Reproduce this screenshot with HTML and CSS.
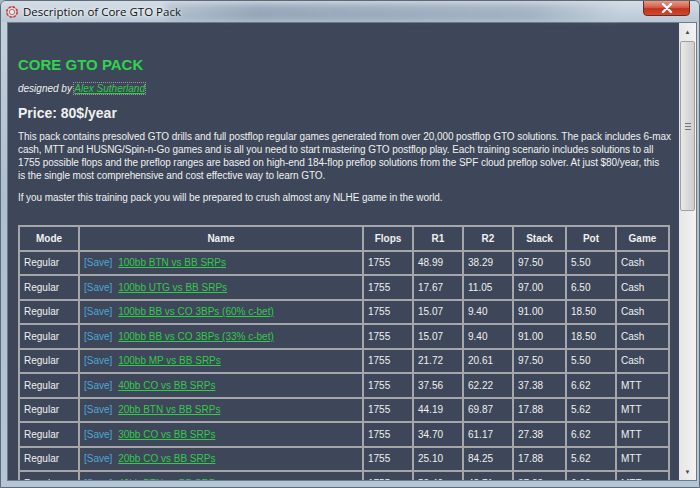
FILE: index.html
```html
<!DOCTYPE html>
<html lang="en">
<head>
  <meta charset="UTF-8">
  <title>Description of Core GTO Pack</title>
  <link rel="stylesheet" href="styles.css">
</head>
<body>

  <div class="window">
    <!-- Title bar -->
    <div class="titlebar">
      <svg class="app-icon" width="12" height="12" viewBox="0 0 12 12">
        <circle cx="6" cy="6" r="5.2" fill="#d8d8d8" stroke="#777" stroke-width="0.8"/>
        <circle cx="6" cy="6" r="5.2" fill="none" stroke="#d33" stroke-width="1.6" stroke-dasharray="2.2 1.9"/>
        <circle cx="6" cy="6" r="2.6" fill="#eee" stroke="#c44" stroke-width="0.8"/>
      </svg>
      <span class="title-text">Description of Core GTO Pack</span>
      <div class="glass-blur"></div>
      <div class="close-btn">
        <svg width="12" height="10" viewBox="0 0 12 10">
          <path d="M2 1 L10 9 M10 1 L2 9" stroke="#fff" stroke-width="2.4" stroke-linecap="round"/>
        </svg>
      </div>
    </div>

    <!-- Body -->
    <div class="frame">
      <div class="content">
        <h1>CORE GTO PACK</h1>
        <p class="author">designed by <a href="#">Alex Sutherland</a></p>
        <h2>Price: 80$/year</h2>
        <p class="desc">
          This pack contains presolved GTO drills and full postflop regular games generated from over 20,000 postflop GTO solutions. The pack includes 6-max<br>
          cash, MTT and HUSNG/Spin-n-Go games and is all you need to start mastering GTO postflop play. Each training scenario includes solutions to all<br>
          1755 possible flops and the preflop ranges are based on high-end 184-flop preflop solutions from the SPF cloud preflop solver. At just $80/year, this<br>
          is the single most comprehensive and cost effective way to learn GTO.
        </p>
        <p class="desc">If you master this training pack you will be prepared to crush almost any NLHE game in the world.</p>

        <table class="packs">
          <thead>
            <tr>
              <th class="c-mode">Mode</th>
              <th class="c-name">Name</th>
              <th class="c-num">Flops</th>
              <th class="c-num">R1</th>
              <th class="c-num">R2</th>
              <th class="c-stack">Stack</th>
              <th class="c-num">Pot</th>
              <th class="c-game">Game</th>
            </tr>
          </thead>
          <tbody>
            <tr><td>Regular</td><td><span class="save">[Save]</span> <a href="#">100bb BTN vs BB SRPs</a></td><td>1755</td><td>48.99</td><td>38.29</td><td>97.50</td><td>5.50</td><td>Cash</td></tr>
            <tr><td>Regular</td><td><span class="save">[Save]</span> <a href="#">100bb UTG vs BB SRPs</a></td><td>1755</td><td>17.67</td><td>11.05</td><td>97.00</td><td>6.50</td><td>Cash</td></tr>
            <tr><td>Regular</td><td><span class="save">[Save]</span> <a href="#">100bb BB vs CO 3BPs (60% c-bet)</a></td><td>1755</td><td>15.07</td><td>9.40</td><td>91.00</td><td>18.50</td><td>Cash</td></tr>
            <tr><td>Regular</td><td><span class="save">[Save]</span> <a href="#">100bb BB vs CO 3BPs (33% c-bet)</a></td><td>1755</td><td>15.07</td><td>9.40</td><td>91.00</td><td>18.50</td><td>Cash</td></tr>
            <tr><td>Regular</td><td><span class="save">[Save]</span> <a href="#">100bb MP vs BB SRPs</a></td><td>1755</td><td>21.72</td><td>20.61</td><td>97.50</td><td>5.50</td><td>Cash</td></tr>
            <tr><td>Regular</td><td><span class="save">[Save]</span> <a href="#">40bb CO vs BB SRPs</a></td><td>1755</td><td>37.56</td><td>62.22</td><td>37.38</td><td>6.62</td><td>MTT</td></tr>
            <tr><td>Regular</td><td><span class="save">[Save]</span> <a href="#">20bb BTN vs BB SRPs</a></td><td>1755</td><td>44.19</td><td>69.87</td><td>17.88</td><td>5.62</td><td>MTT</td></tr>
            <tr><td>Regular</td><td><span class="save">[Save]</span> <a href="#">30bb CO vs BB SRPs</a></td><td>1755</td><td>34.70</td><td>61.17</td><td>27.38</td><td>6.62</td><td>MTT</td></tr>
            <tr><td>Regular</td><td><span class="save">[Save]</span> <a href="#">20bb CO vs BB SRPs</a></td><td>1755</td><td>25.10</td><td>84.25</td><td>17.88</td><td>5.62</td><td>MTT</td></tr>
            <tr><td>Regular</td><td><span class="save">[Save]</span> <a href="#">40bb BTN vs BB SRPs</a></td><td>1755</td><td>53.40</td><td>48.71</td><td>37.38</td><td>6.62</td><td>MTT</td></tr>
            <tr><td>Regular</td><td><span class="save">[Save]</span> <a href="#">30bb BTN vs BB SRPs</a></td><td>1755</td><td>50.12</td><td>58.30</td><td>27.38</td><td>5.62</td><td>MTT</td></tr>
          </tbody>
        </table>
      </div>

      <!-- Scrollbar -->
      <div class="scrollbar">
        <div class="sb-arrow">&#9650;</div>
        <div class="sb-track">
          <div class="sb-thumb"><span class="grip"></span></div>
        </div>
        <div class="sb-arrow">&#9660;</div>
      </div>
    </div>
  </div>

</body>
</html>
```

FILE: styles.css
```css
body {
  margin: 0;
  background-color: #a9b8c7;
  font-family: "Liberation Sans", Arial, sans-serif;
}
.window {
  width: 700px;
  height: 488px;
  display: flex;
  flex-direction: column;
  overflow: hidden;
  background: linear-gradient(to bottom, #c6d2de, #aebfcf 40%, #b4c5d6);
  border: 1px solid #5f6a75;
  box-sizing: border-box;
  border-radius: 6px 6px 0 0;
}
.titlebar {
  height: 21px;
  flex-shrink: 0;
  display: flex;
  align-items: center;
  position: relative;
  padding-left: 5px;
  background: linear-gradient(to bottom, #d3dde7, #b9c8d6);
}
.app-icon {
  margin-right: 5px;
}
.title-text {
  font-family: "Open Sans", "Liberation Sans", sans-serif;
  font-size: 11.5px;
  color: #111;
  text-shadow: 0 0 6px #fff, 0 0 3px #fff;
}
.glass-blur {
  position: absolute;
  left: 165px;
  right: 80px;
  top: 2px;
  height: 18px;
  background: linear-gradient(to right, rgba(80, 100, 130, 0.15), rgba(70, 90, 120, 0.35) 20%, rgba(70, 90, 120, 0.25) 80%, rgba(200, 210, 220, 0.2));
  filter: blur(3px);
}
.close-btn {
  position: absolute;
  right: 9px;
  top: -1px;
  width: 47px;
  height: 16px;
  background: linear-gradient(to bottom, #e49a88, #d4604a 45%, #c0321c 55%, #d24a30);
  border: 1px solid #6b2a22;
  border-radius: 0 0 4px 4px;
  display: flex;
  align-items: center;
  justify-content: center;
  box-sizing: border-box;
}
.frame {
  flex: 1;
  display: flex;
  margin: 0 2px 6px 6px;
  border: 1px solid #6c7c8c;
  min-height: 0;
}
.content {
  flex: 1;
  background-color: #3d4759;
  color: #f0f0f0;
  padding: 0 10px;
  overflow: hidden;
  font-size: 10px;
}
h1 {
  color: #2fd34c;
  font-size: 15px;
  font-weight: bold;
  margin: 32px 0 0;
  line-height: 20px;
}
.author {
  font-style: italic;
  margin: 7px 0 0;
  line-height: 14px;
}
.author a {
  color: #33c94a;
  outline: 1px dotted #999;
}
h2 {
  font-size: 14px;
  font-weight: bold;
  margin: 8px 0 0;
  line-height: 18px;
}
.desc {
  margin: 8px 0 0;
  line-height: 13px;
  white-space: nowrap;
  letter-spacing: -0.07px;
}
.desc + .desc {
  margin-top: 9px;
}
.packs {
  margin-top: 21px;
  border-collapse: collapse;
  width: 652px;
  border: 2px solid #a4a6aa;
}
.packs th,
.packs td {
  border: 2px solid #a4a6aa;
  height: 22.5px;
  padding: 0 4px;
  text-align: left;
  white-space: nowrap;
}
.packs th {
  text-align: center;
  font-weight: bold;
}
.c-mode { width: 50px; }
.c-name { width: 274px; }
.c-num { width: 40px; }
.c-stack { width: 43px; }
.c-game { width: 43px; }
.save {
  color: #4ea6d4;
  margin-right: 3px;
}
.packs a {
  color: #33c94a;
}
.scrollbar {
  width: 17px;
  display: flex;
  flex-direction: column;
  background: linear-gradient(to right, #e6e6e6, #f2f2f2);
}
.sb-arrow {
  height: 17px;
  font-size: 6px;
  color: #444;
  display: flex;
  align-items: center;
  justify-content: center;
}
.sb-track {
  flex: 1;
  padding: 0 1px;
}
.sb-thumb {
  height: 168px;
  margin-top: 1px;
  border: 1px solid #a0a0a0;
  border-radius: 2px;
  background: linear-gradient(to right, #e8e8e8, #dadada 50%, #cfcfcf);
  display: flex;
  align-items: center;
  justify-content: center;
}
.grip {
  width: 6px;
  height: 5px;
  border-top: 1px solid #777;
  border-bottom: 1px solid #777;
  position: relative;
}
.grip::after {
  content: "";
  position: absolute;
  left: 0;
  right: 0;
  top: 2px;
  border-top: 1px solid #777;
}
```
